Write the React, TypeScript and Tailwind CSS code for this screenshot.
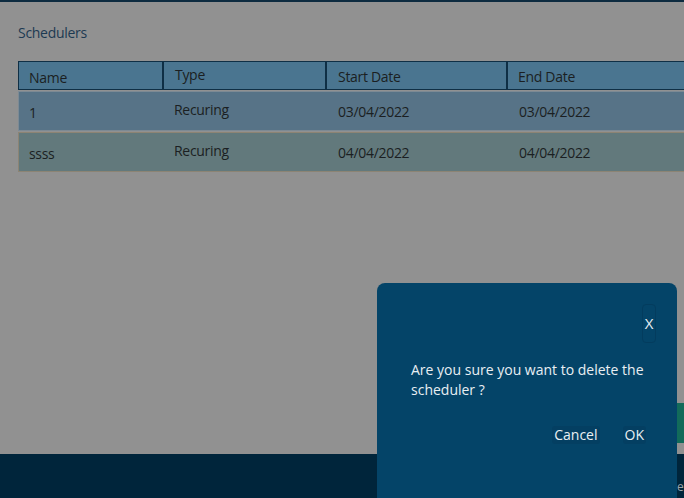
const rows = [
  { name: "1", type: "Recuring", start: "03/04/2022", end: "03/04/2022", tone: "bg-[#577387] border-[#7d8a94]" },
  { name: "ssss", type: "Recuring", start: "04/04/2022", end: "04/04/2022", tone: "bg-[#62797c] border-[#8c8474]" },
];

function ConfirmDialog() {
  return (
    <div className="absolute left-[377px] top-[283px] h-[240px] w-[300px] rounded-lg bg-[#044468] tracking-normal text-[#e9eff3]">
      <div className="flex justify-end pr-[21px] pt-[21px]">
        <button className="h-[39px] w-[14px] rounded-[4px] border border-[#033c5e] text-[15px] leading-none">X</button>
      </div>
      <p className="mt-[17px] pl-[34px] pr-[20px] text-[14px] leading-[20px]">
        Are you sure you want to delete the scheduler ?
      </p>
      <div className="mt-[26px] flex justify-end gap-[23px] pr-[31px]">
        <button className="h-[18px] rounded-[3px] bg-[#043f62] px-[2px] text-[14px] leading-[18px]">Cancel</button>
        <button className="h-[18px] rounded-[3px] bg-[#043f62] px-[2px] text-[14px] leading-[18px]">OK</button>
      </div>
    </div>
  );
}

export default function App() {
  return (
    <div className="relative flex h-[498px] w-[684px] flex-col overflow-hidden bg-[#919191] font-['Open_Sans',sans-serif] tracking-[-0.3px] text-[#1b1f22]">
      <div className="h-[2px] bg-[#0d2b40]" />

      <div className="flex-1 pl-[18px]">
        <h1 className="mt-[22px] text-[14px] leading-[18px] text-[#1d3a52]">Schedulers</h1>

        <div className="mt-[19px] w-[700px] text-[14px]">
          <div className="grid h-[29px] grid-cols-[145px_163px_181px_1fr] border border-[#0f2f45] bg-[#4a7590]">
            <div className="border-r-2 border-[#0f2f45] pl-[10px] pt-[5px]">Name</div>
            <div className="border-r-2 border-[#0f2f45] pl-[11px] pt-[2px]">Type</div>
            <div className="border-r-2 border-[#0f2f45] pl-[11px] pt-[4px]">Start Date</div>
            <div className="pl-[10px] pt-[4px]">End Date</div>
          </div>

          {rows.map((r) => (
            <div
              key={r.name}
              className={`mt-[1px] grid h-[40px] grid-cols-[145px_163px_181px_1fr] border ${r.tone}`}
            >
              <div className="pl-[10px] pt-[10px]">{r.name}</div>
              <div className="pl-[10px] pt-[7px]">{r.type}</div>
              <div className="pl-[11px] pt-[9px]">{r.start}</div>
              <div className="pl-[11px] pt-[9px]">{r.end}</div>
            </div>
          ))}
        </div>
      </div>

      {/* action button peeking out at the right edge */}
      <div className="absolute left-[677px] top-[403px] h-[40px] w-[20px] bg-[#126b5a]" />

      <footer className="relative h-[44px] bg-[#00253b]">
        <span className="absolute left-[677px] top-[24px] text-[12px] text-[#9aa3aa]">e</span>
      </footer>

      <ConfirmDialog />
    </div>
  );
}
